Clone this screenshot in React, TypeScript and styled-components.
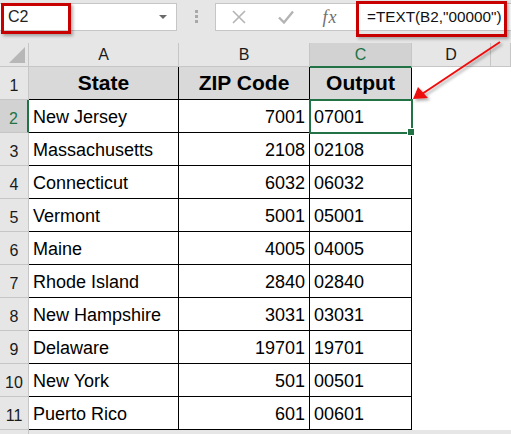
import React from 'react';
import styled, { createGlobalStyle } from 'styled-components';

const GlobalStyle = createGlobalStyle`
  html, body {
    margin: 0;
    padding: 0;
    background: #ffffff;
  }
  body {
    font-family: "Liberation Sans", Arial, sans-serif;
  }
`;

const rows = [
  { state: 'New Jersey', zip: 7001 },
  { state: 'Massachusetts', zip: 2108 },
  { state: 'Connecticut', zip: 6032 },
  { state: 'Vermont', zip: 5001 },
  { state: 'Maine', zip: 4005 },
  { state: 'Rhode Island', zip: 2840 },
  { state: 'New Hampshire', zip: 3031 },
  { state: 'Delaware', zip: 19701 },
  { state: 'New York', zip: 501 },
  { state: 'Puerto Rico', zip: 601 },
];

const columns = ['A', 'B', 'C', 'D'];

const Page = styled.div`
  position: relative;
  width: 511px;
  height: 434px;
  overflow: hidden;
  background: #e6e6e6;
`;

const FormulaBar = styled.div`
  display: flex;
  align-items: flex-start;
  height: 43px;
  padding-top: 3px;
  box-sizing: border-box;
`;

const NameBox = styled.div`
  position: relative;
  display: flex;
  align-items: center;
  justify-content: space-between;
  width: 177px;
  height: 28px;
  box-sizing: border-box;
  background: #ffffff;
  border: 1px solid #c6c6c6;
  border-left: none;
  padding: 0 8px 0 8px;
  font-size: 16px;
  color: #222;
`;

const DropArrow = styled.span`
  width: 0;
  height: 0;
  border-left: 4px solid transparent;
  border-right: 4px solid transparent;
  border-top: 4px solid #6a6a6a;
  margin-right: 1px;
`;

const Grip = styled.div`
  display: flex;
  flex-direction: column;
  gap: 2px;
  width: 38px;
  align-items: center;
  padding-top: 7px;
`;

const GripDot = styled.span`
  width: 3px;
  height: 3px;
  background: #a8a8a8;
`;

const FormulaBox = styled.div`
  position: relative;
  display: flex;
  align-items: center;
  flex: 1;
  height: 28px;
  box-sizing: border-box;
  background: #ffffff;
  border: 1px solid #c6c6c6;
  border-right: none;
`;

const ToolButton = styled.span<{ $w: number }>`
  display: flex;
  align-items: center;
  justify-content: center;
  width: ${(p) => p.$w}px;
  height: 100%;
`;

const FxLabel = styled.span`
  font-family: "Liberation Serif", "Times New Roman", serif;
  font-style: italic;
  font-size: 18px;
  color: #707070;
  letter-spacing: 1px;
`;

const FormulaText = styled.span`
  padding-left: 17px;
  font-size: 15.3px;
  color: #111;
  white-space: nowrap;
`;

const RedFrame = styled.div<{ $l: number; $t: number; $w: number; $h: number }>`
  position: absolute;
  left: ${(p) => p.$l}px;
  top: ${(p) => p.$t}px;
  width: ${(p) => p.$w}px;
  height: ${(p) => p.$h}px;
  box-sizing: border-box;
  border: 3px solid #c80000;
  box-shadow: 2px 2px 3px rgba(0, 0, 0, 0.3);
  pointer-events: none;
`;

const Sheet = styled.div`
  display: grid;
  grid-template-columns: 29px 150px 131px 102px 79px 1fr;
  grid-auto-rows: 33px;
  grid-template-rows: 24px;
`;

const Corner = styled.div`
  position: relative;
  background: #e6e6e6;
  border-right: 1px solid #c6c6c6;
  border-bottom: 1px solid #c6c6c6;
  &::after {
    content: '';
    position: absolute;
    right: 3px;
    bottom: 3px;
    width: 0;
    height: 0;
    border-left: 16px solid transparent;
    border-bottom: 16px solid #b7b7b7;
  }
`;

const ColHead = styled.div<{ $active?: boolean }>`
  display: flex;
  align-items: center;
  justify-content: center;
  background: ${(p) => (p.$active ? '#d2d2d2' : '#e6e6e6')};
  border-right: 1px solid #c6c6c6;
  border-bottom: ${(p) => (p.$active ? '2px solid #217346' : '1px solid #c6c6c6')};
  margin-bottom: ${(p) => (p.$active ? '-1px' : '0')};
  font-size: 16px;
  padding-top: 1px;
  color: ${(p) => (p.$active ? '#217346' : '#1a1a1a')};
  position: relative;
  z-index: ${(p) => (p.$active ? 1 : 0)};
`;

const RowHead = styled.div<{ $active?: boolean }>`
  display: flex;
  align-items: flex-end;
  justify-content: center;
  padding-bottom: 4px;
  box-sizing: border-box;
  background: ${(p) => (p.$active ? '#d2d2d2' : '#e6e6e6')};
  border-right: ${(p) => (p.$active ? '2px solid #217346' : '1px solid #c6c6c6')};
  border-bottom: 1px solid #c6c6c6;
  font-size: 16px;
  color: ${(p) => (p.$active ? '#217346' : '#1a1a1a')};
`;

const Cell = styled.div<{ $align?: 'left' | 'right'; $head?: boolean; $blank?: boolean }>`
  position: relative;
  display: flex;
  align-items: center;
  justify-content: ${(p) => (p.$head ? 'center' : p.$align === 'right' ? 'flex-end' : 'flex-start')};
  padding: ${(p) => (p.$head ? '0' : '3px 4px 0 4px')};
  box-sizing: border-box;
  background: ${(p) => (p.$head ? '#d9d9d9' : '#ffffff')};
  border-right: ${(p) => (p.$blank ? 'none' : '1px solid #000')};
  border-bottom: ${(p) => (p.$blank ? 'none' : '1px solid #000')};
  font-size: ${(p) => (p.$head ? '21px' : '18px')};
  font-weight: ${(p) => (p.$head ? 700 : 400)};
  color: #000;
  white-space: nowrap;
`;

const Selection = styled.div`
  position: absolute;
  left: -1px;
  top: -1px;
  right: -2px;
  bottom: -2px;
  border: 2px solid #217346;
  pointer-events: none;
  z-index: 2;
  &::after {
    content: '';
    position: absolute;
    right: -4px;
    bottom: -4px;
    width: 6px;
    height: 6px;
    background: #217346;
    border: 1px solid #ffffff;
  }
`;

const Overlay = styled.svg`
  position: absolute;
  left: 0;
  top: 0;
  pointer-events: none;
  z-index: 5;
`;

const pad = (n: number) => String(n).padStart(5, '0');

export default function App() {
  return (
    <>
      <GlobalStyle />
      <Page>
        <FormulaBar>
          <NameBox>
            C2
            <DropArrow />
          </NameBox>
          <Grip>
            <GripDot />
            <GripDot />
            <GripDot />
          </Grip>
          <FormulaBox>
            <ToolButton $w={46}>
              <svg width="16" height="16" viewBox="0 0 16 16">
                <path d="M2 2 L14 14 M14 2 L2 14" stroke="#b4b4b4" strokeWidth="1.6" fill="none" />
              </svg>
            </ToolButton>
            <ToolButton $w={48}>
              <svg width="18" height="16" viewBox="0 0 18 16">
                <path d="M2 8.5 L7 13.5 L16 2.5" stroke="#b4b4b4" strokeWidth="2.4" fill="none" />
              </svg>
            </ToolButton>
            <ToolButton $w={40}>
              <FxLabel>fx</FxLabel>
            </ToolButton>
            <FormulaText>=TEXT(B2,"00000")</FormulaText>
          </FormulaBox>
        </FormulaBar>

        <Sheet>
          <Corner />
          {columns.map((c) => (
            <ColHead key={c} $active={c === 'C'}>
              {c}
            </ColHead>
          ))}
          <ColHead />

          <RowHead>1</RowHead>
          <Cell $head>State</Cell>
          <Cell $head>ZIP Code</Cell>
          <Cell $head>Output</Cell>
          <Cell $blank />
          <Cell $blank />

          {rows.map((r, i) => (
            <React.Fragment key={r.state}>
              <RowHead $active={i === 0}>{i + 2}</RowHead>
              <Cell>{r.state}</Cell>
              <Cell $align="right">{r.zip}</Cell>
              <Cell>
                {pad(r.zip)}
                {i === 0 && <Selection />}
              </Cell>
              <Cell $blank />
              <Cell $blank />
            </React.Fragment>
          ))}
          <RowHead />
        </Sheet>

        <RedFrame $l={1} $t={3} $w={70} $h={31} />
        <RedFrame $l={356} $t={1} $w={151} $h={36} />

        <Overlay width="511" height="434" viewBox="0 0 511 434">
          <defs>
            <filter id="arrowShadow" x="-20%" y="-20%" width="140%" height="140%">
              <feDropShadow dx="2" dy="2" stdDeviation="1.5" floodColor="#000" floodOpacity="0.35" />
            </filter>
          </defs>
          <g filter="url(#arrowShadow)">
            <line x1="500" y1="42" x2="422" y2="94" stroke="#ee1111" strokeWidth="2" />
            <path d="M413 99 L418 87 L428 98 Z" fill="#ee1111" />
          </g>
        </Overlay>
      </Page>
    </>
  );
}
